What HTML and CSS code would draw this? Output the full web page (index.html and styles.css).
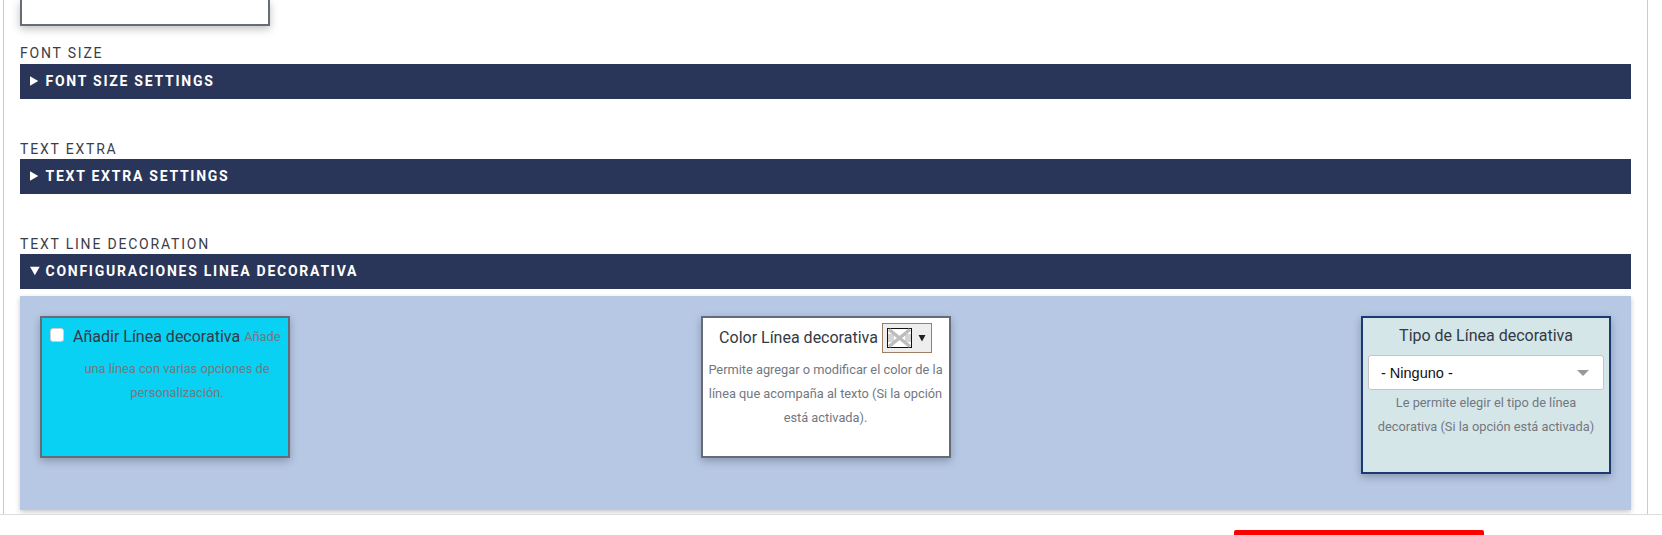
FILE: index.html
```html
<!DOCTYPE html>
<html lang="es">
<head>
<meta charset="utf-8">
<title>Text settings</title>
<link rel="stylesheet" href="styles.css">
</head>
<body>
<main class="page">
  <div class="stub"></div>
  <section class="group first">
    <div class="label">FONT SIZE</div>
    <div class="bar"><svg class="arrow" width="16" height="10" viewBox="0 0 16 10"><path d="M0 0L8.5 5L0 10Z" fill="#fff"/></svg>FONT SIZE SETTINGS</div>
  </section>
  <section class="group">
    <div class="label">TEXT EXTRA</div>
    <div class="bar"><svg class="arrow" width="16" height="10" viewBox="0 0 16 10"><path d="M0 0L8.5 5L0 10Z" fill="#fff"/></svg>TEXT EXTRA SETTINGS</div>
  </section>
  <section class="group">
    <div class="label">TEXT LINE DECORATION</div>
    <div class="bar"><svg class="arrow" width="16" height="10" viewBox="0 0 16 10"><path d="M0 0.5H10L5 9.5Z" fill="#fff"/></svg>CONFIGURACIONES LINEA DECORATIVA</div>
    <div class="panel">
      <div class="card cyan">
        <p class="check-line"><input class="check" type="checkbox"><span class="title">Añadir Línea decorativa</span> <span class="help">Añade</span></p>
        <p class="help block indented">una línea con varias opciones de personalización.</p>
      </div>
      <div class="card">
        <p class="title-line"><span class="title">Color Línea decorativa</span>
          <span class="swatch">
            <svg class="swatch-icon" width="25" height="20" viewBox="0 0 25 20">
              <rect x="0.5" y="0.5" width="24" height="19" fill="#fff" stroke="#111"/>
              <rect x="1" y="6" width="6" height="8" fill="#d4d4d4"/>
              <rect x="18" y="6" width="6" height="8" fill="#d4d4d4"/>
              <path d="M2 1.5L23 18.5M23 1.5L2 18.5" stroke="#bdbdbd" stroke-width="3.5"/>
            </svg>
            <svg class="caret" width="8" height="8" viewBox="0 0 8 8"><path d="M0.5 1H7.5L4 7.5Z" fill="#222"/></svg>
          </span>
        </p>
        <p class="help block">Permite agregar o modificar el color de la línea que acompaña al texto (Si la opción está activada).</p>
      </div>
      <div class="card teal">
        <p class="title-line tipo"><span class="title">Tipo de Línea decorativa</span></p>
        <div class="select"><span>- Ninguno -</span><span class="select-arrow"></span></div>
        <p class="help block">Le permite elegir el tipo de línea decorativa (Si la opción está activada)</p>
      </div>
    </div>
  </section>
</main>
<footer class="footer"><div class="red-button"></div></footer>
</body>
</html>
```
FILE: styles.css
```css
* { box-sizing: border-box; }
html, body { margin: 0; padding: 0; background: #fff; }
body { width: 1662px; height: 535px; overflow: hidden; font-family: "Roboto", "Noto Sans", sans-serif; }
p { margin: 0; }
.page {
  height: 515px;
  margin: 0 14px 0 3px;
  padding: 0 16px 0 16px;
  border-left: 1px solid #ccc;
  border-right: 1px solid #ccc;
  overflow: hidden;
}
.stub {
  width: 250px;
  height: 26px;
  border: 2px solid #666b78;
  border-top: 0;
  background: #fff;
  box-shadow: 0 3px 8px rgba(0,0,0,.25);
}
.group { margin-top: 39.5px; }
.group.first { margin-top: 17px; }
.label {
  height: 21px;
  font-size: 14px;
  line-height: 22px;
  letter-spacing: 1.8px;
  color: #3c3c46;
}
.first .label { line-height: 21px; }
.bar {
  height: 34.5px;
  padding-left: 10px;
  background: #2a3659;
  color: #fff;
  font-size: 14px;
  font-weight: 700;
  letter-spacing: 1.75px;
  display: flex;
  align-items: center;
}
.arrow { width: 15.5px; flex: none; }
.panel {
  margin-top: 7.5px;
  height: 214px;
  padding: 20px;
  background: #b7c8e5;
  display: flex;
  justify-content: space-between;
  align-items: flex-start;
  box-shadow: 0 2px 5px rgba(0,0,0,.22);
}
.card {
  width: 250px;
  height: 142px;
  padding: 0 5px;
  background: #fff;
  border: 2px solid #666b78;
  box-shadow: 0 3px 8px rgba(0,0,0,.25);
  text-align: center;
}
.card.cyan { background: #08d1f3; }
.card.teal { height: 158px; background: #d5e6e9; border-color: #1a3a73; }
.title { font-size: 16px; color: #333a45; }
.help { font-size: 12.8px; color: #73787f; }
.block { display: block; line-height: 24px; }
.indented { padding-left: 24px; }
.check-line { display: flex; align-items: center; height: 39px; padding-bottom: 3px; text-align: left; white-space: nowrap; gap: 4px; margin-right: -5px; }
.check {
  appearance: none;
  width: 14px;
  height: 14px;
  margin: 0 5px 2px 3px;
  flex: none;
  background: #fff;
  border: 1px solid #ccc;
  border-radius: 3px;
}
.title-line { height: 40px; padding-bottom: 2px; display: flex; align-items: center; justify-content: center; gap: 4px; }
.tipo { height: 37px; padding-bottom: 2px; }
.swatch {
  width: 50px;
  height: 30px;
  margin-bottom: -2px;
  background: #eee;
  border: 1px solid #a07c60;
  display: flex;
  align-items: center;
  padding-left: 4px;
  gap: 6px;
}
.caret { flex: none; }
.swatch-icon { flex: none; }
.select {
  height: 35px;
  margin: 0 0 1px;
  padding: 0 14px 0 12px;
  background: #fff;
  border: 1px solid #c4c4c4;
  border-radius: 3px;
  display: flex;
  align-items: center;
  justify-content: space-between;
  font-family: "Liberation Sans", sans-serif;
  font-size: 14.5px;
  color: #111;
}
.select-arrow { width: 0; height: 0; border: 6.5px solid transparent; border-top: 6px solid #999; border-bottom: 0; }
.footer {
  height: 21px;
  padding: 15px 0 0 1234px;
  border-top: 1px solid #ddd;
  margin-top: -1px;
  background: #fff;
  position: relative;
}
.red-button { width: 250px; height: 8px; background: #f00; border-radius: 2px 2px 0 0; }
```
